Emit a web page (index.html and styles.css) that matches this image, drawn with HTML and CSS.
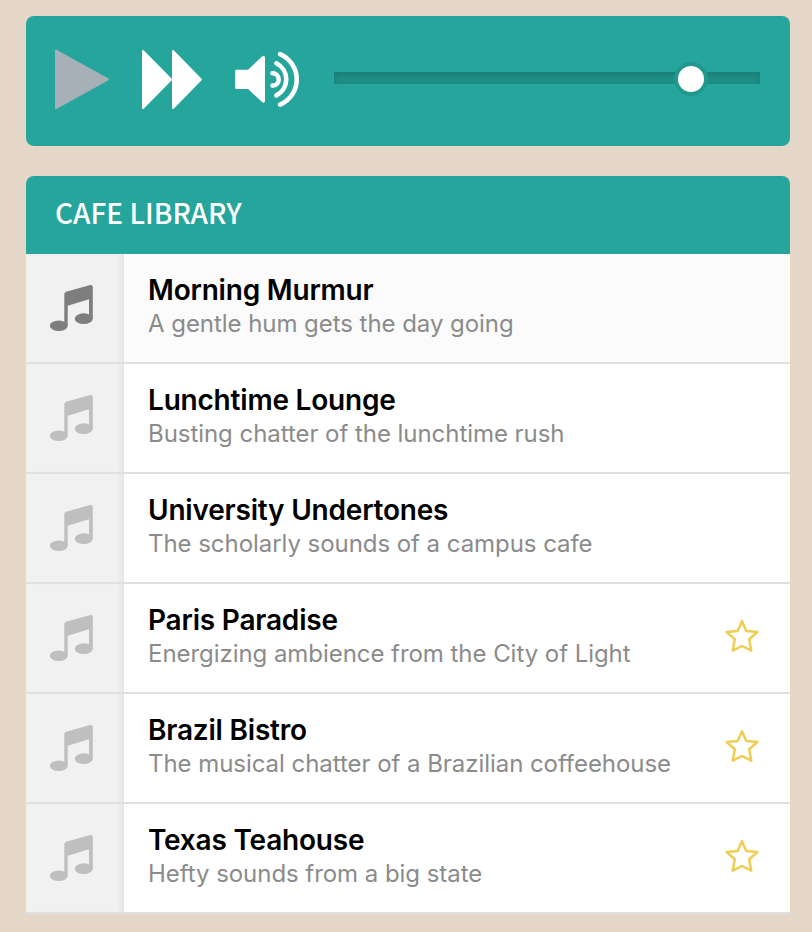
FILE: index.html
```html
<!DOCTYPE html>
<html lang="en">

<head>
    <meta charset="UTF-8">
    <meta name="viewport" content="width=device-width, initial-scale=1.0">
    <title>Cafe Library</title>
    <link rel="stylesheet" href="styles.css">
</head>

<body>
    <!-- shared icons -->
    <svg class="sprite" width="0" height="0">
        <symbol id="note" viewBox="0 0 44 48">
            <path d="M14.3 10.2Q14.3 8.4 16 7.8L40.3 1Q42.8 .6 42.8 3V34.7H39V15.3L17.7 21.7V41.7H14.3Z" />
            <ellipse cx="8.8" cy="41.7" rx="8.9" ry="5.3" />
            <ellipse cx="33.7" cy="34.7" rx="9" ry="5.4" />
        </symbol>
        <symbol id="star" viewBox="0 0 36 36">
            <path d="M18 3.2L22.3 13L33.4 14L25.2 21.3L27.3 32.7L18 28L8.7 32.7L10.8 21.3L2.6 14L13.7 13Z" />
        </symbol>
    </svg>

    <div class="player">
        <button type="button" class="control play" aria-label="Play">
            <svg width="55" height="60" viewBox="0 0 55 60"><path d="M1 1.5L53 30.3L1 59Z" /></svg>
        </button>
        <button type="button" class="control next" aria-label="Next">
            <svg width="60" height="60" viewBox="0 0 60 60"><path d="M1 2L29 30.5L1 59ZM31 2L58.8 30.5L31 59Z" /></svg>
        </button>
        <button type="button" class="control volume" aria-label="Volume">
            <svg width="65" height="60" viewBox="0 0 65 60">
                <path d="M1.2 21.7H13.5L27.7 8.2Q29 7.2 29 9V51.5Q29 53.5 27.7 52.3L13.5 39H1.2Z" />
                <path class="wave" d="M37.5 24.2A6.2 6.2 0 0 1 37.5 36.6M41.4 14.3A18 18 0 0 1 41.4 46.4M45.1 5.2A27.4 27.4 0 0 1 45.1 55.6" />
            </svg>
        </button>
        <div class="slider">
            <div class="thumb"></div>
        </div>
    </div>

    <div class="library">
        <h1>CAFE LIBRARY</h1>
        <ul class="tracks">
            <li class="track active">
                <div class="icon"><svg class="note"><use href="#note" /></svg></div>
                <div class="info">
                    <h2>Morning Murmur</h2>
                    <p>A gentle hum gets the day going</p>
                </div>
            </li>
            <li class="track">
                <div class="icon"><svg class="note"><use href="#note" /></svg></div>
                <div class="info">
                    <h2>Lunchtime Lounge</h2>
                    <p>Busting chatter of the lunchtime rush</p>
                </div>
            </li>
            <li class="track">
                <div class="icon"><svg class="note"><use href="#note" /></svg></div>
                <div class="info">
                    <h2>University Undertones</h2>
                    <p>The scholarly sounds of a campus cafe</p>
                </div>
            </li>
            <li class="track">
                <div class="icon"><svg class="note"><use href="#note" /></svg></div>
                <div class="info">
                    <h2>Paris Paradise</h2>
                    <p>Energizing ambience from the City of Light</p>
                </div>
                <svg class="star"><use href="#star" /></svg>
            </li>
            <li class="track">
                <div class="icon"><svg class="note"><use href="#note" /></svg></div>
                <div class="info">
                    <h2>Brazil Bistro</h2>
                    <p>The musical chatter of a Brazilian coffeehouse</p>
                </div>
                <svg class="star"><use href="#star" /></svg>
            </li>
            <li class="track">
                <div class="icon"><svg class="note"><use href="#note" /></svg></div>
                <div class="info">
                    <h2>Texas Teahouse</h2>
                    <p>Hefty sounds from a big state</p>
                </div>
                <svg class="star"><use href="#star" /></svg>
            </li>
        </ul>
    </div>
</body>

</html>
```
FILE: styles.css
```css
* {
    box-sizing: border-box;
}

body {
    margin: 0;
    padding: 16px 22px 18px 26px;
    background: #e5d8c8;
    font-family: Inter, "Liberation Sans", sans-serif;
}

h1,
h2,
p,
ul {
    margin: 0;
    padding: 0;
}

.sprite {
    display: none;
}

.player {
    display: flex;
    height: 130px;
    padding: 33px 30px 0 29px;
    margin-bottom: 30px;
    background: #25a59b;
    border-radius: 8px;
}

.control {
    display: block;
    height: 60px;
    padding: 0;
    border: 0;
    background: none;
}

.control svg {
    display: block;
    fill: #fff;
    stroke: #fff;
    stroke-width: 2;
    stroke-linejoin: round;
}

.play {
    margin-right: 32px;
}

.play svg {
    fill: #a7b0b8;
    stroke: #a7b0b8;
}

.next {
    margin-right: 33px;
}

.volume {
    margin-right: 34px;
}

.volume .wave {
    fill: none;
    stroke-width: 4.6;
    stroke-linecap: round;
}

.slider {
    position: relative;
    flex: 1;
    height: 12px;
    margin-top: 23px;
    background: #1f8f86;
    box-shadow: inset 0 2px 6px rgba(0, 0, 0, 0.16);
}

.thumb {
    position: absolute;
    top: -6px;
    left: 344px;
    width: 26px;
    height: 26px;
    border-radius: 50%;
    background: #fff;
    box-shadow: 0 0 0 4px #22978e;
}

.library h1 {
    height: 78px;
    padding-left: 29px;
    border-radius: 8px 8px 0 0;
    background: #25a59b;
    color: #fff;
    font: 500 28px/72px "Noto Sans CJK JP", sans-serif;
}

.tracks {
    list-style: none;
}

.track {
    display: flex;
    height: 110px;
    background: #fff;
    border-bottom: 2px solid #e0e0e0;
}

.active {
    background: #fbfbfb;
}

.icon {
    width: 98px;
    padding: 30px 0 0 24px;
    background: #f1f1f1;
    border-right: 2px solid #e6e6e6;
    box-shadow: inset -5px 0 2px -1px #ebebeb;
}

.note {
    display: block;
    width: 44px;
    height: 48px;
    fill: #bfbfbf;
}

.active .note {
    fill: #7e7e7e;
}

.info {
    flex: 1;
    padding: 19px 0 0 24px;
    white-space: nowrap;
}

.info h2 {
    color: #000;
    font-size: 28px;
    font-weight: 600;
    line-height: 34px;
    letter-spacing: -0.2px;
}

.info p {
    color: #8b8b8b;
    font-size: 24px;
    line-height: 34px;
    letter-spacing: -0.05px;
}

.star {
    width: 36px;
    height: 36px;
    margin: 34px 30px 0 0;
    fill: none;
    stroke: #f0cd55;
    stroke-width: 2.5;
    stroke-linejoin: round;
}
```
